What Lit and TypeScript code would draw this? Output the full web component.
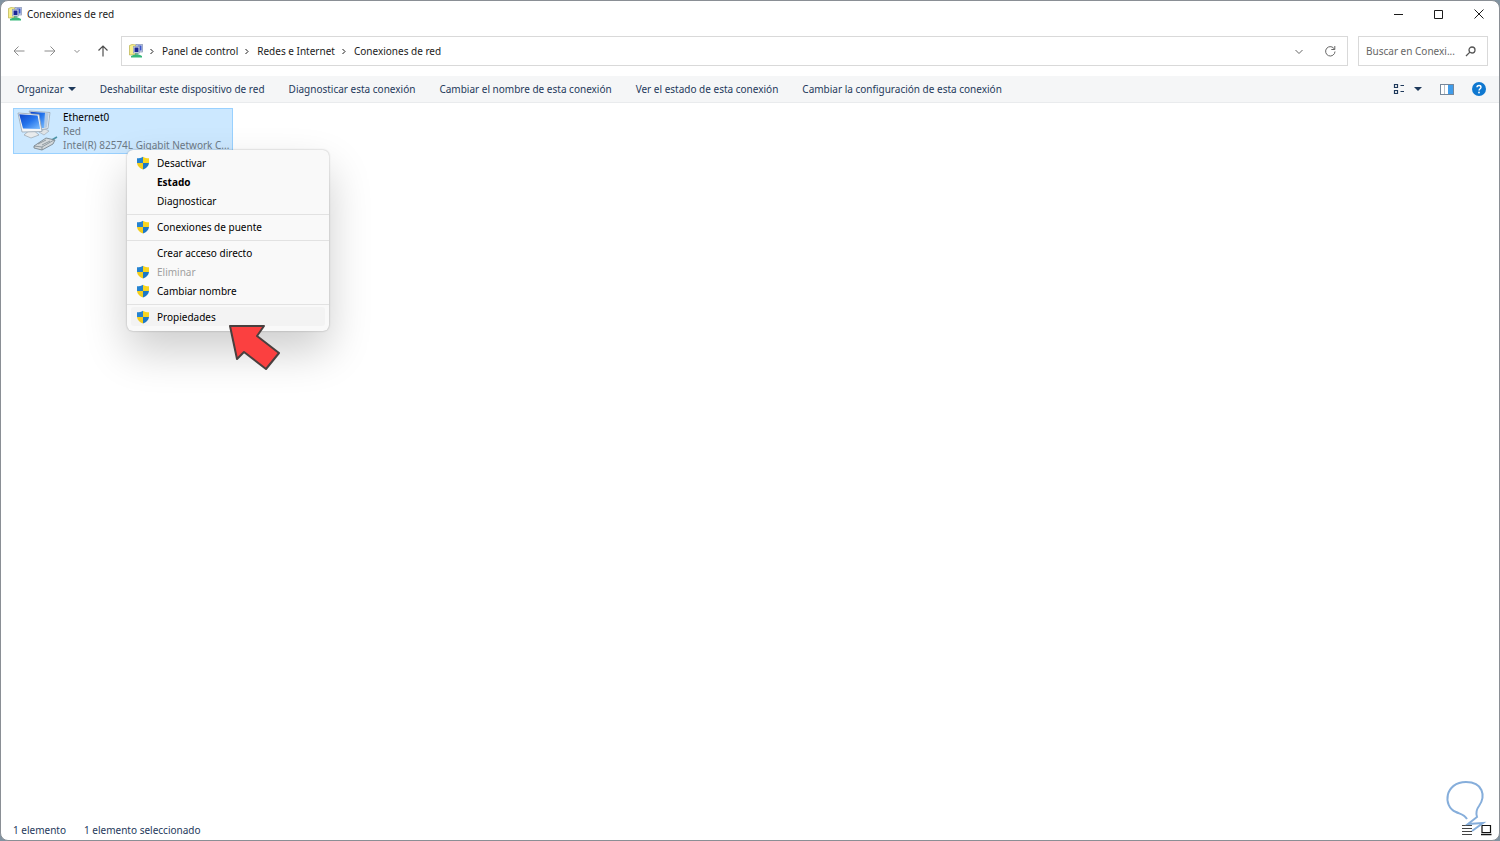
import { LitElement, html, css, svg, nothing } from "lit";
import { customElement } from "lit/decorators.js";
import { classMap } from "lit/directives/class-map.js";

const networkIcon = html`<svg width="14" height="14" viewBox="0 0 14 14" aria-hidden="true">
  <path d="M.5 1.500L3 .5L7 1V10.500L.5 11z" fill="#f7ef8c" stroke="#b9b04c" stroke-width=".7" />
  <rect x="7" y=".5" width="6.500" height="7.500" fill="#cfd8e8" stroke="#8291b5" stroke-width=".7" />
  <rect x="8.500" y="1.500" width="4" height="5" fill="#3a55cc" />
  <rect x="4.500" y="2.500" width="6" height="6.500" fill="#dce3f0" stroke="#8c9bbd" stroke-width=".7" />
  <rect x="5.500" y="3.500" width="4" height="4.500" fill="#1a2595" />
  <path d="M6 9.300h3.500v1.500H6z" fill="#55a183" />
  <path d="M2 12L5 10.800H10.500L13 12V13.500H2z" fill="#35b779" />
</svg>`;

const shield = html`<svg width="14" height="14" viewBox="0 0 14 14" aria-hidden="true">
  <path d="M7 .7C5.300 1.900 3.200 2.200 1 2.300V7H7z" fill="#2583d0" />
  <path d="M7 .7C8.700 1.900 10.800 2.200 13 2.300V7H7z" fill="#f8d51f" />
  <path d="M1 7C1.300 10.200 3.800 12.300 7 13.400V7z" fill="#f3cd1c" />
  <path d="M13 7C12.700 10.200 10.200 12.300 7 13.400V7z" fill="#1d78c6" />
</svg>`;

const connectionIcon = html`<svg width="42" height="42" viewBox="0 0 42 42" aria-hidden="true">
  <defs>
    <linearGradient id="screen" x1="0" y1="0" x2="1" y2="1">
      <stop offset="0" stop-color="#0f45c8" />
      <stop offset=".5" stop-color="#2474ec" />
      <stop offset="1" stop-color="#7fc0ff" />
    </linearGradient>
  </defs>
  <path d="M22 22L28 19L32 21L27 25z" fill="#dfe3e6" stroke="#9aa5ae" stroke-width=".6" />
  <path d="M12 1L33 2.500L31 18.500L22 20z" fill="#eef2f5" stroke="#98a6b2" stroke-width=".8" />
  <path d="M13 1.700L28 2.800L27.500 18L22 18.500z" fill="url(#screen)" />
  <path d="M28 2.800L31.800 3.200L30 17.500L27.500 18z" fill="#b4cbe4" />
  <path d="M7 25L11 21.500H18L22 25L14 28z" fill="#e8ebed" stroke="#9aa5ae" stroke-width=".7" />
  <path d="M1 3L22 4.500L25 21.500L5 22z" fill="#f4f6f8" stroke="#98a6b2" stroke-width=".8" />
  <path d="M2.200 4.200L20.600 5.600L23.200 19L6 18.500z" fill="url(#screen)" />
  <path d="M33 31L40 27" stroke="#4b95a8" stroke-width="1.500" />
  <path d="M17 36L29 28L38 30L36 34L25 40L17 38z" fill="#d3d8db" stroke="#6f7c85" stroke-width=".8" />
  <path d="M17 36L25 37L37 30M25 37V40M21 34L29 30M25 35L33 31" fill="none" stroke="#7c8991" stroke-width=".8" />
</svg>`;

const stroke = (d: string, size: number, width = 1) => html`<svg
  width=${size} height=${size} viewBox="0 0 ${size} ${size}" fill="none" stroke="currentColor"
  stroke-width=${width} aria-hidden="true">${svg`<path d=${d} />`}</svg>`;

const triangle = html`<svg width="8" height="4" viewBox="0 0 8 4" aria-hidden="true"><path d="M0 0H8L4 4z" fill="currentColor" /></svg>`;

interface Entry {
  label: string;
  shield?: boolean;
  bold?: boolean;
  disabled?: boolean;
  active?: boolean;
}

const groups: Entry[][] = [
  [{ label: "Desactivar", shield: true }, { label: "Estado", bold: true }, { label: "Diagnosticar" }],
  [{ label: "Conexiones de puente", shield: true }],
  [
    { label: "Crear acceso directo" },
    { label: "Eliminar", shield: true, disabled: true },
    { label: "Cambiar nombre", shield: true },
  ],
  [{ label: "Propiedades", shield: true, active: true }],
];

const commands = [
  "Deshabilitar este dispositivo de red",
  "Diagnosticar esta conexión",
  "Cambiar el nombre de esta conexión",
  "Ver el estado de esta conexión",
  "Cambiar la configuración de esta conexión",
];

@customElement("context-menu")
export class ContextMenu extends LitElement {
  static styles = css`
    :host {
      display: block;
      box-sizing: border-box;
      width: 202px;
      padding: 3px 0 5px;
      border-radius: 6px;
      background: #f9f9f9;
      box-shadow: 0 0 2px rgba(0, 0, 0, 0.3), 0 20px 44px rgba(0, 0, 0, 0.2);
    }
    .group + .group {
      margin-top: 4px;
      padding-top: 2px;
      border-top: 1px solid #e2e2e2;
    }
    .item {
      display: flex;
      align-items: center;
      width: calc(100% - 8px);
      height: 19px;
      margin: 0 4px;
      padding: 0 5px;
      gap: 7px;
      border: 0;
      border-radius: 3px;
      background: none;
      color: #000;
      font: inherit;
      text-align: left;
    }
    .icon {
      display: flex;
      width: 14px;
    }
    .bold {
      font-weight: 700;
    }
    .item:disabled {
      color: #a0a0a0;
    }
    .active {
      background: #f3f3f3;
    }
  `;

  render() {
    return groups.map(
      (group) => html`<div class="group">
        ${group.map(
          (e) => html`<button
            class=${classMap({ item: true, bold: !!e.bold, active: !!e.active })}
            ?disabled=${e.disabled}
          ><span class="icon">${e.shield ? shield : nothing}</span>${e.label}</button>`
        )}
      </div>`
    );
  }
}

@customElement("app-root")
export class AppRoot extends LitElement {
  static styles = css`
    :host {
      display: block;
      height: 100vh;
      background: #8193a1;
      color: #1b1b1b;
      font: 10px/14px "Noto Sans", "Open Sans", sans-serif;
    }
    svg {
      display: block;
      flex: none;
    }
    button {
      display: flex;
      align-items: center;
      padding: 0;
      border: 0;
      background: none;
      color: inherit;
      font: inherit;
      white-space: nowrap;
    }
    .window {
      position: relative;
      display: flex;
      flex-direction: column;
      box-sizing: border-box;
      height: 100%;
      border: 1px solid #8a8f95;
      border-radius: 8px;
      background: #fff;
      overflow: hidden;
    }
    .title {
      display: flex;
      align-items: center;
      height: 25px;
      padding: 0 14px 0 7px;
      gap: 5px;
    }
    .title h1 {
      flex: 1;
      margin: 0;
      font: inherit;
    }
    .controls {
      display: flex;
      gap: 28px;
    }
    .nav {
      display: flex;
      align-items: center;
      height: 50px;
      padding: 0 11px 0 12px;
    }
    .arrows {
      display: flex;
      align-items: center;
      width: 108px;
      color: #8c8c8c;
    }
    .arrows button + button {
      margin-left: 19px;
    }
    .arrows .recent {
      margin-left: 16px;
    }
    .arrows .up {
      margin-left: 15px;
      color: #4f4f4f;
    }
    .address,
    .search {
      display: flex;
      align-items: center;
      box-sizing: border-box;
      height: 30px;
      border: 1px solid #d9d9d9;
    }
    .address {
      flex: 1;
      padding: 0 11px 0 7px;
    }
    .crumbs {
      display: flex;
      align-items: center;
      flex: 1;
    }
    .crumbs a {
      color: inherit;
      text-decoration: none;
    }
    .crumbs .sep {
      margin: 0 6px 0 5px;
    }
    .tools {
      display: flex;
      align-items: center;
      gap: 20px;
      color: #666;
    }
    .search {
      width: 130px;
      margin-left: 10px;
      padding: 0 11px 0 7px;
      gap: 8px;
      color: #555;
    }
    .search input {
      flex: 1;
      min-width: 0;
      padding: 0;
      border: 0;
      outline: 0;
      background: none;
      color: #666;
      font: inherit;
    }
    .search input::placeholder {
      color: #666;
    }
    .bar {
      display: flex;
      align-items: center;
      box-sizing: border-box;
      height: 27px;
      padding: 0 13px 0 16px;
      gap: 24px;
      border-bottom: 1px solid #e9ebed;
      background: #f5f6f7;
      color: #1e395b;
    }
    .bar button {
      gap: 4px;
    }
    .view {
      display: flex;
      align-items: center;
      margin-left: auto;
      gap: 18px;
    }
    .view .layout {
      gap: 9px;
    }
    .content {
      flex: 1;
      padding: 5px 12px;
    }
    .tile {
      display: flex;
      box-sizing: border-box;
      width: 220px;
      height: 46px;
      padding: 1px 3px;
      gap: 4px;
      border: 1px solid #99d1ff;
      background: #cce8ff;
      color: #6d7a86;
    }
    .details div {
      white-space: nowrap;
    }
    .details .name {
      color: #000;
    }
    .status {
      display: flex;
      align-items: center;
      height: 20px;
      padding: 0 7px 0 12px;
      gap: 18px;
      color: #1e395b;
    }
    .modes {
      display: flex;
      margin-left: auto;
      gap: 7px;
      color: #444;
    }
    .menu {
      position: absolute;
      left: 126px;
      top: 149px;
    }
    .pointer {
      position: absolute;
      left: 225px;
      top: 320px;
    }
    .mark {
      position: absolute;
      right: 12px;
      bottom: 4px;
    }
  `;

  render() {
    return html`<div class="window">
      <header class="title">
        ${networkIcon}
        <h1>Conexiones de red</h1>
        <div class="controls">
          <button aria-label="Minimizar">${stroke("M1 6.500H10", 12)}</button>
          <button aria-label="Maximizar">${stroke("M1.500 2.500H9.500V10.500H1.500z", 12)}</button>
          <button aria-label="Cerrar">${stroke("M1.500 1.500L10.500 10.500M10.500 1.500L1.500 10.500", 12)}</button>
        </div>
      </header>
      <nav class="nav">
        <div class="arrows">
          <button aria-label="Atrás">${stroke("M11.500 6H1M5.500 1.500L1 6L5.500 10.500", 12)}</button>
          <button aria-label="Adelante">${stroke("M.5 6H11M6.500 1.500L11 6L6.500 10.500", 12)}</button>
          <button class="recent" aria-label="Recientes">${stroke("M2.500 4L5 6.500L7.500 4", 10)}</button>
          <button class="up" aria-label="Subir">${stroke("M6 11.500V1M1.500 5.500L6 1L10.500 5.500", 12, 1.2)}</button>
        </div>
        <div class="address">
          <div class="crumbs">
            ${networkIcon}
            ${["Panel de control", "Redes e Internet", "Conexiones de red"].map(
              (c) => html`<span class="sep">${stroke("M2.500 2L5 4.500L2.500 7", 8)}</span><a href="#">${c}</a>`
            )}
          </div>
          <div class="tools">
            <button aria-label="Ubicaciones anteriores">${stroke("M1.500 4L5 7.500L8.500 4", 10)}</button>
            <button aria-label="Actualizar">${stroke("M10.500 4.200A4.700 4.700 0 1 0 11 6.500M10.800 1V4.500H7.300", 12)}</button>
          </div>
        </div>
        <label class="search">
          <input type="text" aria-label="Buscar" placeholder="Buscar en Conexi..." />
          ${stroke("M10 4A3 3 0 1 1 4 4A3 3 0 1 1 10 4M4.900 6.100L1 10", 11, 1.3)}
        </label>
      </nav>
      <div class="bar">
        <button>Organizar ${triangle}</button>
        ${commands.map((c) => html`<button>${c}</button>`)}
        <div class="view">
          <button class="layout" aria-label="Cambiar la vista">
            ${stroke("M1.500 1.500H4.500V4.500H1.500zM1.500 7.500H4.500V10.500H1.500zM7.500 2.500H11M7.500 8.500H11", 12, 1.2)}${triangle}
          </button>
          <button aria-label="Panel de vista previa">
            <svg width="14" height="11" viewBox="0 0 14 11">
              <rect x=".5" y=".5" width="13" height="10" fill="#fff" stroke="#76879a" />
              <path d="M4.500 1V10" stroke="#b5c0ca" />
              <rect x="8" y="1" width="5" height="9" fill="#3f9cea" />
            </svg>
          </button>
          <button aria-label="Ayuda">
            <svg width="14" height="14" viewBox="0 0 14 14">
              <circle cx="7" cy="7" r="7" fill="#0f78d0" />
              <path d="M5 5.300C5 2.800 9 2.900 9 5.200C9 6.700 7 6.700 7 8.500" fill="none" stroke="#fff" stroke-width="1.400" />
              <circle cx="7" cy="10.500" r=".9" fill="#fff" />
            </svg>
          </button>
        </div>
      </div>
      <main class="content">
        <div class="tile">
          ${connectionIcon}
          <div class="details">
            <div class="name">Ethernet0</div>
            <div>Red</div>
            <div>Intel(R) 82574L Gigabit Network C...</div>
          </div>
        </div>
      </main>
      <footer class="status">
        <span>1 elemento</span>
        <span>1 elemento seleccionado</span>
        <div class="modes">
          <button aria-label="Detalles">${stroke("M1 1.500H11M1 4.500H11M1 7.500H11M1 10.500H11", 12)}</button>
          <button aria-label="Iconos grandes">
            <svg width="12" height="12" viewBox="0 0 12 12">
              <path d="M2 1.500H10.500V8.500H2z" fill="none" stroke="#111" stroke-width="1.200" />
              <path d="M1 10.500H11.500" stroke="#111" stroke-width="1.400" />
            </svg>
          </button>
        </div>
      </footer>
      <context-menu class="menu"></context-menu>
      <svg class="pointer" width="56" height="52" viewBox="0 0 56 52" aria-hidden="true">
        <path d="M4 5L38 5L31 15L53 32L40 48L18 31L11 38z" fill="#fb4040" stroke="#49403f" stroke-width="2" stroke-linejoin="round" />
      </svg>
      <svg class="mark" width="42" height="56" viewBox="0 0 42 56" fill="none" stroke="#86aedb" stroke-width="2" aria-hidden="true">
        <path d="M22 39C19 34 15 34 11 32C-3 26 0 2 21 2C38 2 41 16 34 26C31 30 31 34 32 37L23 44L38 43L27 51" />
      </svg>
    </div>`;
  }
}
